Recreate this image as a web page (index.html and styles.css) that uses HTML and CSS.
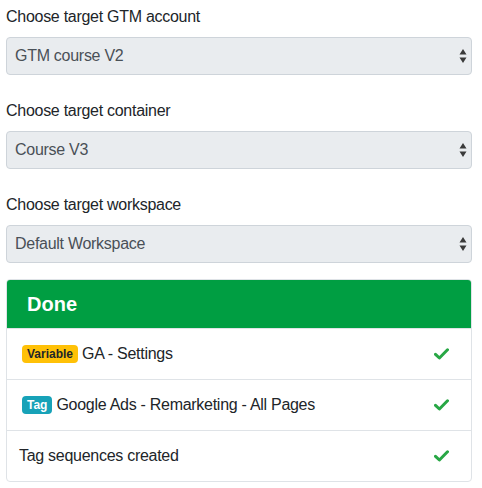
FILE: index.html
```html
<!DOCTYPE html>
<html>
<head>
<meta charset="utf-8">
<link rel="stylesheet" href="styles.css">
</head>
<body>
<div class="page">
  <div class="field">
    <div class="label">Choose target GTM account</div>
    <div class="select"><span>GTM course V2</span><svg class="arrows" width="8" height="16" viewBox="0 0 8 16"><path d="M4 1 L7.5 6.5 L0.5 6.5 Z M0.5 9.5 L7.5 9.5 L4 15 Z" fill="#3a3a3a"/></svg></div>
  </div>
  <div class="field">
    <div class="label">Choose target container</div>
    <div class="select"><span>Course V3</span><svg class="arrows" width="8" height="16" viewBox="0 0 8 16"><path d="M4 1 L7.5 6.5 L0.5 6.5 Z M0.5 9.5 L7.5 9.5 L4 15 Z" fill="#3a3a3a"/></svg></div>
  </div>
  <div class="field">
    <div class="label">Choose target workspace</div>
    <div class="select"><span>Default Workspace</span><svg class="arrows" width="8" height="16" viewBox="0 0 8 16"><path d="M4 1 L7.5 6.5 L0.5 6.5 Z M0.5 9.5 L7.5 9.5 L4 15 Z" fill="#3a3a3a"/></svg></div>
  </div>
  <div class="card">
    <div class="card-header">Done</div>
    <ul class="list">
      <li class="item"><span class="name"><span class="badge badge-warning">Variable</span> GA - Settings</span><svg class="check" width="15" height="12" viewBox="0 0 15 12"><path d="M1.5 6.3 L5.4 10 L13.5 1.8" fill="none" stroke="#28a745" stroke-width="3" stroke-linecap="round" stroke-linejoin="round"/></svg></li>
      <li class="item"><span class="name"><span class="badge badge-info">Tag</span> Google Ads - Remarketing - All Pages</span><svg class="check" width="15" height="12" viewBox="0 0 15 12"><path d="M1.5 6.3 L5.4 10 L13.5 1.8" fill="none" stroke="#28a745" stroke-width="3" stroke-linecap="round" stroke-linejoin="round"/></svg></li>
      <li class="item item-plain"><span class="name">Tag sequences created</span><svg class="check" width="15" height="12" viewBox="0 0 15 12"><path d="M1.5 6.3 L5.4 10 L13.5 1.8" fill="none" stroke="#28a745" stroke-width="3" stroke-linecap="round" stroke-linejoin="round"/></svg></li>
    </ul>
  </div>
</div>
</body>
</html>
```
FILE: styles.css
```css
html, body {
  margin: 0;
  padding: 0;
  background: #fff;
}
body {
  font-family: "Liberation Sans", Arial, sans-serif;
  font-size: 16px;
  line-height: 24px;
  letter-spacing: -0.28px;
  color: #212529;
}
.page {
  padding: 5px 10px 0 6px;
}
.field + .field {
  margin-top: 24px;
}
.label {
  margin-bottom: 8px;
}
.select {
  box-sizing: border-box;
  height: 38px;
  display: flex;
  align-items: center;
  justify-content: space-between;
  padding: 0 4px 0 8px;
  background: #e9ecef;
  border: 1px solid #ced4da;
  border-radius: 4px;
  color: #495057;
}
.arrows {
  display: block;
}
.card {
  margin-top: 16px;
  border: 1px solid #dfe3e7;
  border-radius: 4px;
  overflow: hidden;
}
.card-header {
  background: #009e42;
  color: #fff;
  font-weight: bold;
  font-size: 20px;
  line-height: 24px;
  letter-spacing: 0;
  padding: 12px 20px;
  border-bottom: 1px solid #dfe3e7;
}
.list {
  list-style: none;
  margin: 0;
  padding: 0;
}
.item {
  display: flex;
  align-items: center;
  justify-content: space-between;
  height: 50px;
  padding: 0 22px 0 12px;
}
.item + .item {
  border-top: 1px solid #dfe3e7;
}
.name {
  display: flex;
  align-items: center;
  gap: 4px;
}
.badge {
  display: inline-block;
  margin-left: 3px;
  font-size: 12px;
  font-weight: bold;
  line-height: 18px;
  letter-spacing: 0;
  padding: 0 5px;
  border-radius: 4px;
}
.badge-warning {
  background: #ffc107;
  color: #212529;
}
.badge-info {
  background: #17a2b8;
  color: #fff;
}
.check {
  display: block;
}
```
